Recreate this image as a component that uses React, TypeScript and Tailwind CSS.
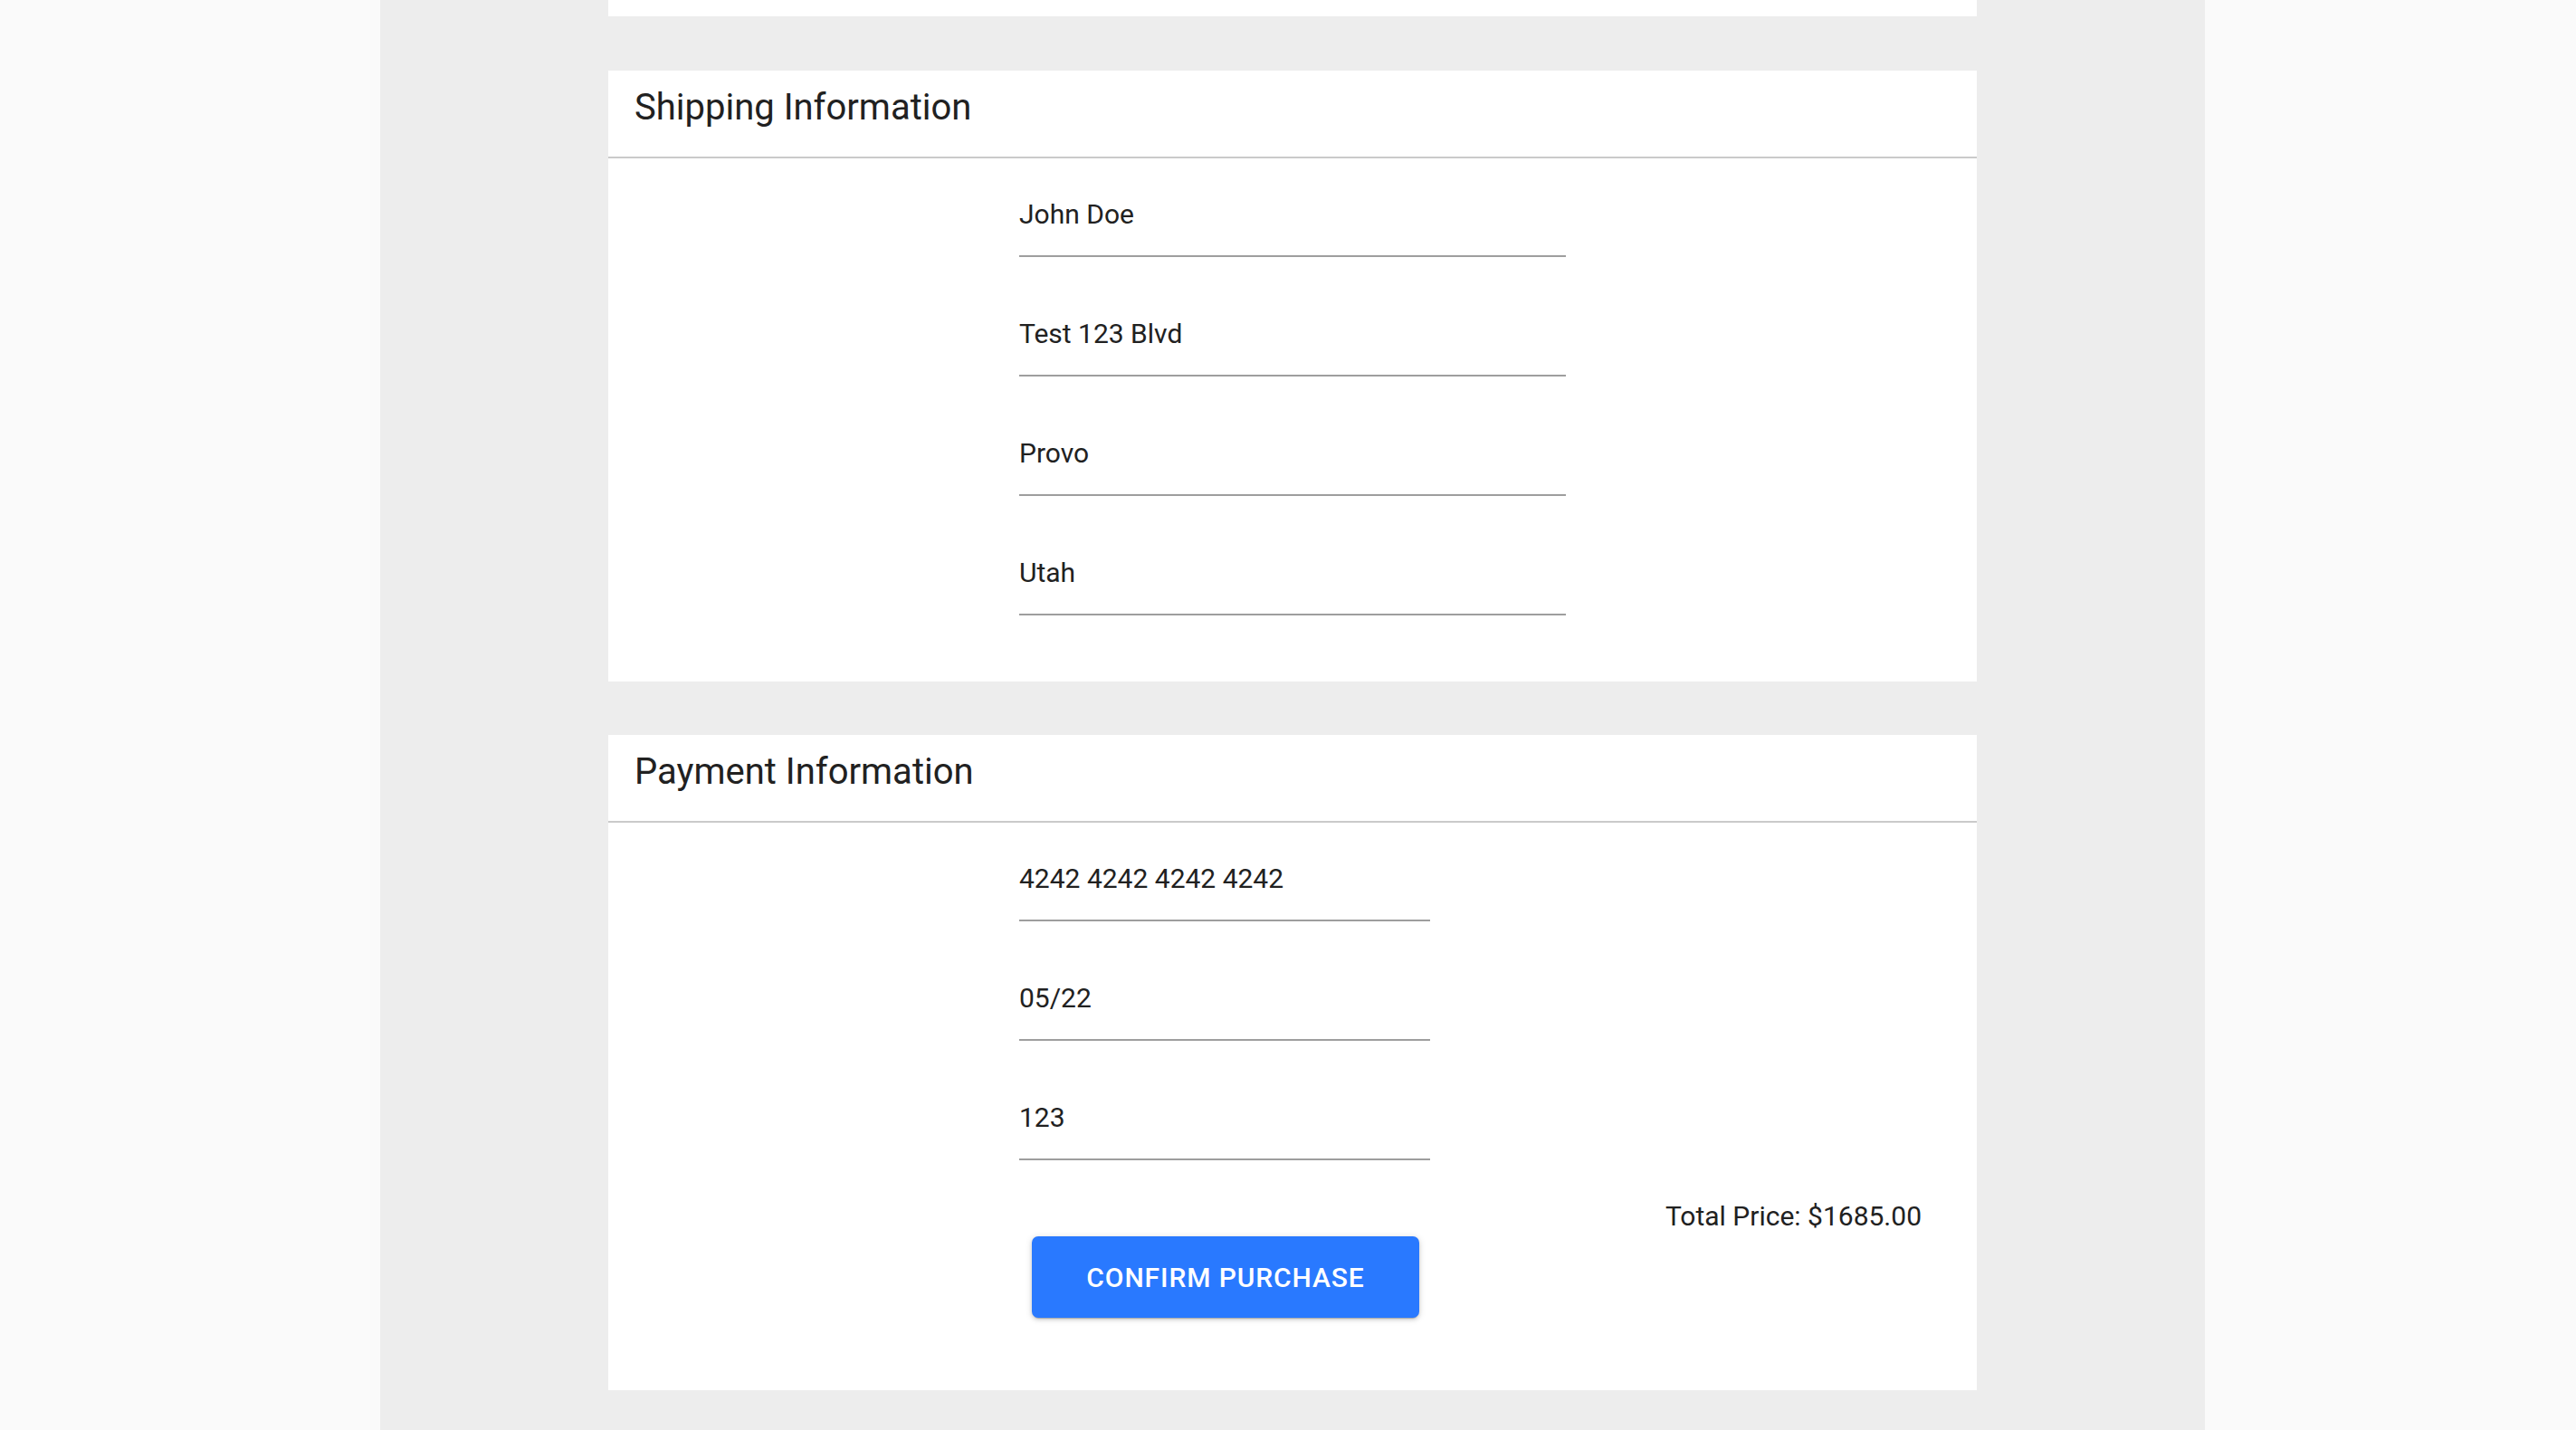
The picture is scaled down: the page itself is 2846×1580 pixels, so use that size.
import React from "react";

const shipping = ["John Doe", "Test 123 Blvd", "Provo", "Utah"];
const payment = ["4242 4242 4242 4242", "05/22", "123"];

function Field({ value, wide }: { value: string; wide?: boolean }) {
  return (
    <div className={`${wide ? "w-[604px]" : "w-[454px]"} border-b-2 border-[#9e9e9e] pb-[27px]`}>
      <div className="text-[30px] leading-[36px] text-[#212121]">{value}</div>
    </div>
  );
}

function CardHeader({ title }: { title: string }) {
  return (
    <div className="h-[97px] border-b-2 border-[#cacaca] pl-[29px] pt-[17px]">
      <h2 className="text-[40px] leading-[48px] font-normal text-[#212121]">{title}</h2>
    </div>
  );
}

export default function App() {
  return (
    <div
      className="flex min-h-screen w-full bg-[#fafafa]"
      style={{ fontFamily: "Roboto, 'Liberation Sans', sans-serif" }}
    >
      <div className="w-[420px] shrink-0" />
      <main className="w-[2016px] shrink-0 bg-[#ededed] px-[252px]">
        {/* tail of the cart card above */}
        <div className="h-[18px] bg-white" />

        <section className="mt-[60px] bg-white">
          <CardHeader title="Shipping Information" />
          <div className="flex flex-col gap-[67px] pb-[73px] pl-[454px] pt-[44px]">
            {shipping.map((v) => (
              <Field key={v} value={v} wide />
            ))}
          </div>
        </section>

        <section className="mt-[59px] bg-white">
          <CardHeader title="Payment Information" />
          <div className="pb-[80px] pt-[44px]">
            <div className="flex flex-col gap-[67px] pl-[454px]">
              {payment.map((v) => (
                <Field key={v} value={v} />
              ))}
            </div>
            <div className="mt-[44px] flex justify-end pr-[61px]">
              <span className="text-[30px] leading-[36px] text-[#212121]">Total Price: $1685.00</span>
            </div>
            <div className="mt-[4px] pl-[468px]">
              <button className="h-[90px] w-[428px] rounded-[7px] bg-[#2979ff] text-[30px] font-medium uppercase tracking-[0.03em] text-white shadow-[0_3px_1px_-2px_rgba(0,0,0,0.2),0_2px_4px_0_rgba(0,0,0,0.14),0_1px_9px_0_rgba(0,0,0,0.12)]">
                Confirm Purchase
              </button>
            </div>
          </div>
        </section>
      </main>
      <div className="flex-1" />
    </div>
  );
}
